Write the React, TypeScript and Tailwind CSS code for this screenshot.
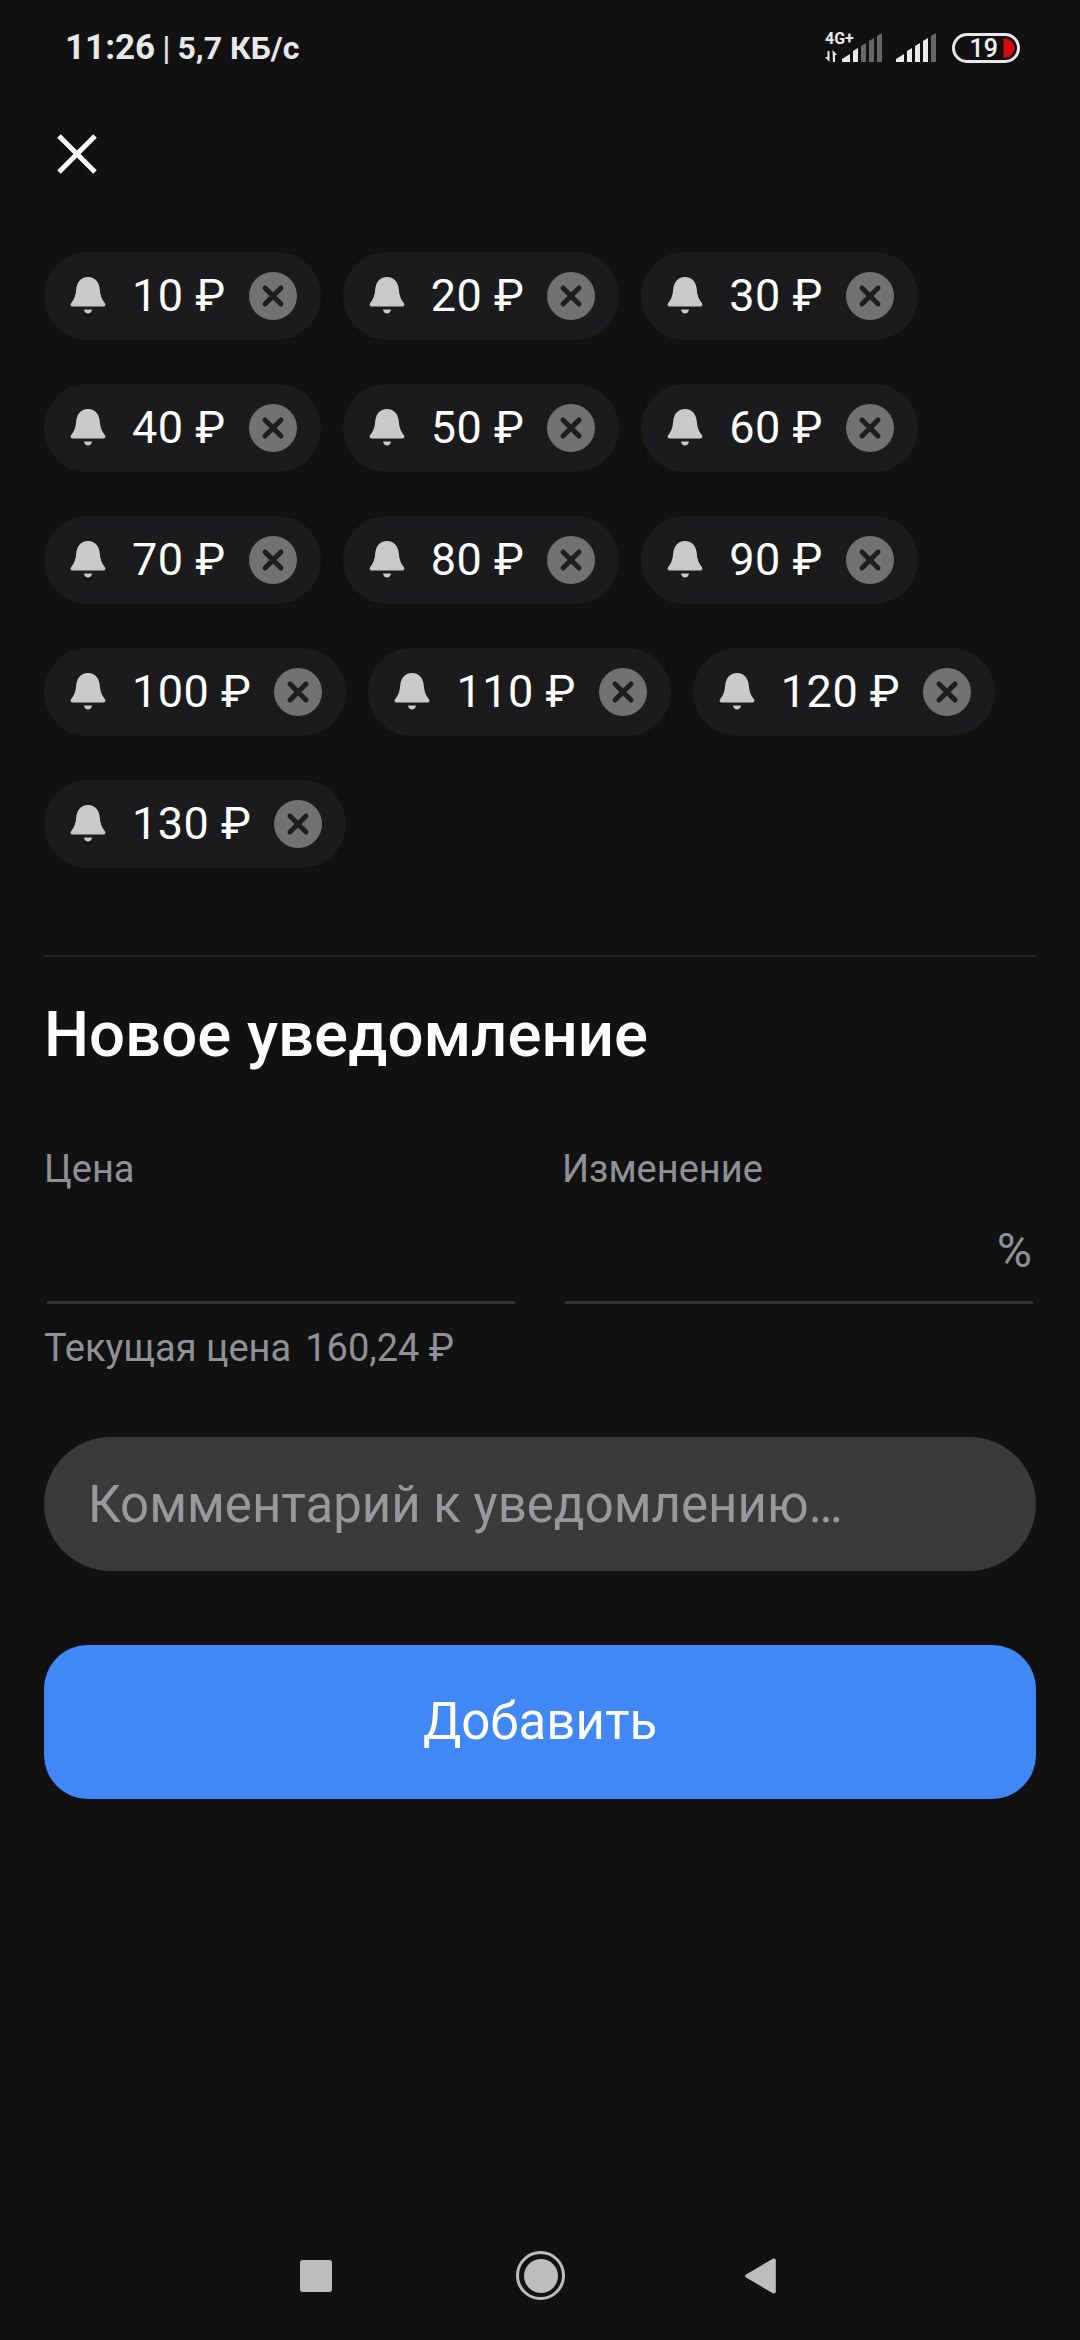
const prices = [
    [10, 20, 30],
    [40, 50, 60],
    [70, 80, 90],
    [100, 110, 120],
    [130],
];

const Bell = () => (
    <svg width="36" height="38" viewBox="0 0 36 38" className="shrink-0">
        <path
            fill="#c9cacc"
            d="M18 0c7.600 0 11.200 5.600 11.800 12.600.5 5.600 1.700 9.600 4.600 13 1.400 1.700 1.400 3.800-.9 4H2.500c-2.300-.2-2.300-2.300-.9-4 2.900-3.400 4.100-7.400 4.600-13C6.800 5.600 10.400 0 18 0z"
        />
        <path fill="#c9cacc" d="M14 32.500h8c-.4 2.500-2 4-4 4s-3.600-1.500-4-4z" />
    </svg>
);

const Chip = ({ value }: { value: number }) => (
    <div className="flex h-[88px] items-center rounded-full bg-[#1b1b1d] pl-[26px] pr-[24px]">
        <Bell />
        <span className="ml-[26px] pb-[2px] text-[45px] leading-none tracking-[0.5px] text-white">{value} ₽</span>
        <span className="ml-[23px] flex h-[48px] w-[48px] items-center justify-center rounded-full bg-[#727274]">
            <svg width="24" height="24" viewBox="0 0 24 24">
                <path d="M4 4l16 16M20 4L4 20" stroke="#1e1e20" strokeWidth="5" strokeLinecap="round" />
            </svg>
        </span>
    </div>
);

const StatusIcons = () => (
    <div className="flex items-center">
        <div className="flex h-[30px] w-[17px] flex-col whitespace-nowrap text-[16px] font-bold leading-[12px] text-[#e8e8e8]">
            <span>4G+</span>
            <svg width="14" height="12" viewBox="0 0 14 12" className="mt-[5px]">
                <path d="M0 7h2.500V1h2v11zM7.500 0l4.500 5h-2v7h-2z" fill="#e8e8e8" />
            </svg>
        </div>
        <svg width="40" height="30" viewBox="0 0 40 30">
            <path d="M0 29v-3l8-5v8zM11 29V18l5-3v14z" fill="#e8e8e8" />
            <path d="M19 29V13l5-3v19zM27 29V8l5-3v24zM35 29V3l5-3v29z" fill="#66666a" />
        </svg>
        <svg width="40" height="30" viewBox="0 0 40 30" className="ml-[14px]">
            <path d="M0 29v-3l8-5v8zM11 29V18l5-3v14zM19 29V13l5-3v19zM27 29V8l5-3v24z" fill="#ececec" />
            <path d="M35 29V3l5-3v29z" fill="#66666a" />
        </svg>
        <div className="ml-[16px] flex h-[30px] w-[68px] items-center justify-end rounded-full border-[3px] border-[#e8e8e8] pr-[2px]">
            <span className="mr-[5px] text-[25px] font-medium leading-none text-[#f0f0f0]">19</span>
            <span className="h-[20px] w-[12px] rounded-r-full border border-[#7c0a0a] bg-[#d80c0c]" />
        </div>
    </div>
);

const Field = ({ label, suffix }: { label: string; suffix?: string }) => (
    <div className="flex w-[474px] flex-col">
        <span className="text-[38px] leading-[42px] text-[#8f9197]">{label}</span>
        <div className="mx-[3px] flex h-[114px] items-start justify-end border-b-[3px] border-[#333335]">
            {suffix && <span className="mt-[37px] pr-[1px] text-[48px] leading-[48px] text-[#8f9197]">{suffix}</span>}
        </div>
    </div>
);

const App = () => {
    return (
        <div className="flex h-[2340px] w-[1080px] flex-col bg-[#111112] font-['Roboto',sans-serif]">
            <div className="flex h-[96px] items-center justify-between pl-[65px] pr-[60px]">
                <span className="flex items-center font-bold text-[#e8e8e8]">
                    <span className="text-[35px]">11:26</span>
                    <span className="mx-[7px] text-[34px] font-normal">|</span>
                    <span className="text-[32px]">5,7 КБ/с</span>
                </span>
                <StatusIcons />
            </div>

            <div className="pl-[57px] pt-[38px]">
                <svg width="40" height="40" viewBox="0 0 40 40">
                    <path d="M2 2l36 36M38 2L2 38" stroke="#fff" strokeWidth="5" />
                </svg>
            </div>

            <div className="mt-[78px] flex flex-col gap-[44px] px-[44px]">
                {prices.map((row, i) => (
                    <div key={i} className="flex gap-[22px]">
                        {row.map((value) => (
                            <Chip key={value} value={value} />
                        ))}
                    </div>
                ))}
            </div>

            <div className="mx-[44px] mt-[87px] border-t-2 border-[#252527]" />

            <div className="px-[44px]">
                <h1 className="mt-[42px] text-[63.500px] font-medium leading-[72px] text-white">Новое уведомление</h1>

                <div className="mt-[77px] flex justify-between">
                    <Field label="Цена" />
                    <Field label="Изменение" suffix="%" />
                </div>

                <p className="mt-[22px] flex gap-[14px] text-[38px] leading-[44px] text-[#8f9197]">
                    <span>Текущая цена</span>
                    <span>160,24 ₽</span>
                </p>

                <div className="mt-[67px] flex h-[134px] items-center rounded-full bg-[#3a3a3a] px-[44px] pt-[3px] text-[51px] text-[#98999c]">
                    Комментарий к уведомлению…
                </div>

                <button className="mt-[74px] flex h-[154px] w-full items-center justify-center rounded-[44px] bg-[#4187f6] text-[51px] text-white">
                    Добавить
                </button>
            </div>

            <div className="mt-auto flex h-[96px] items-center pb-[39px] pl-[300px] pt-[6px]">
                <div className="h-[32px] w-[32px] rounded-[3px] bg-[#bdbdbd]" />
                <div className="ml-[184px] flex h-[49px] w-[49px] items-center justify-center rounded-full border-[3px] border-[#bdbdbd]">
                    <div className="h-[34px] w-[34px] rounded-full bg-[#bdbdbd]" />
                </div>
                <svg width="31" height="36" viewBox="0 0 31 36" className="ml-[180px]">
                    <path d="M29 .5c1 0 1.800.7 1.800 1.700v31.600c0 1-.8 1.700-1.800 1.700-.4 0-.8-.1-1.100-.3L1 19.600c-1.300-.8-1.300-2.400 0-3.200L27.900.8c.3-.2.7-.3 1.100-.3z" fill="#bdbdbd" />
                </svg>
            </div>
        </div>
    );
};

export default App;
